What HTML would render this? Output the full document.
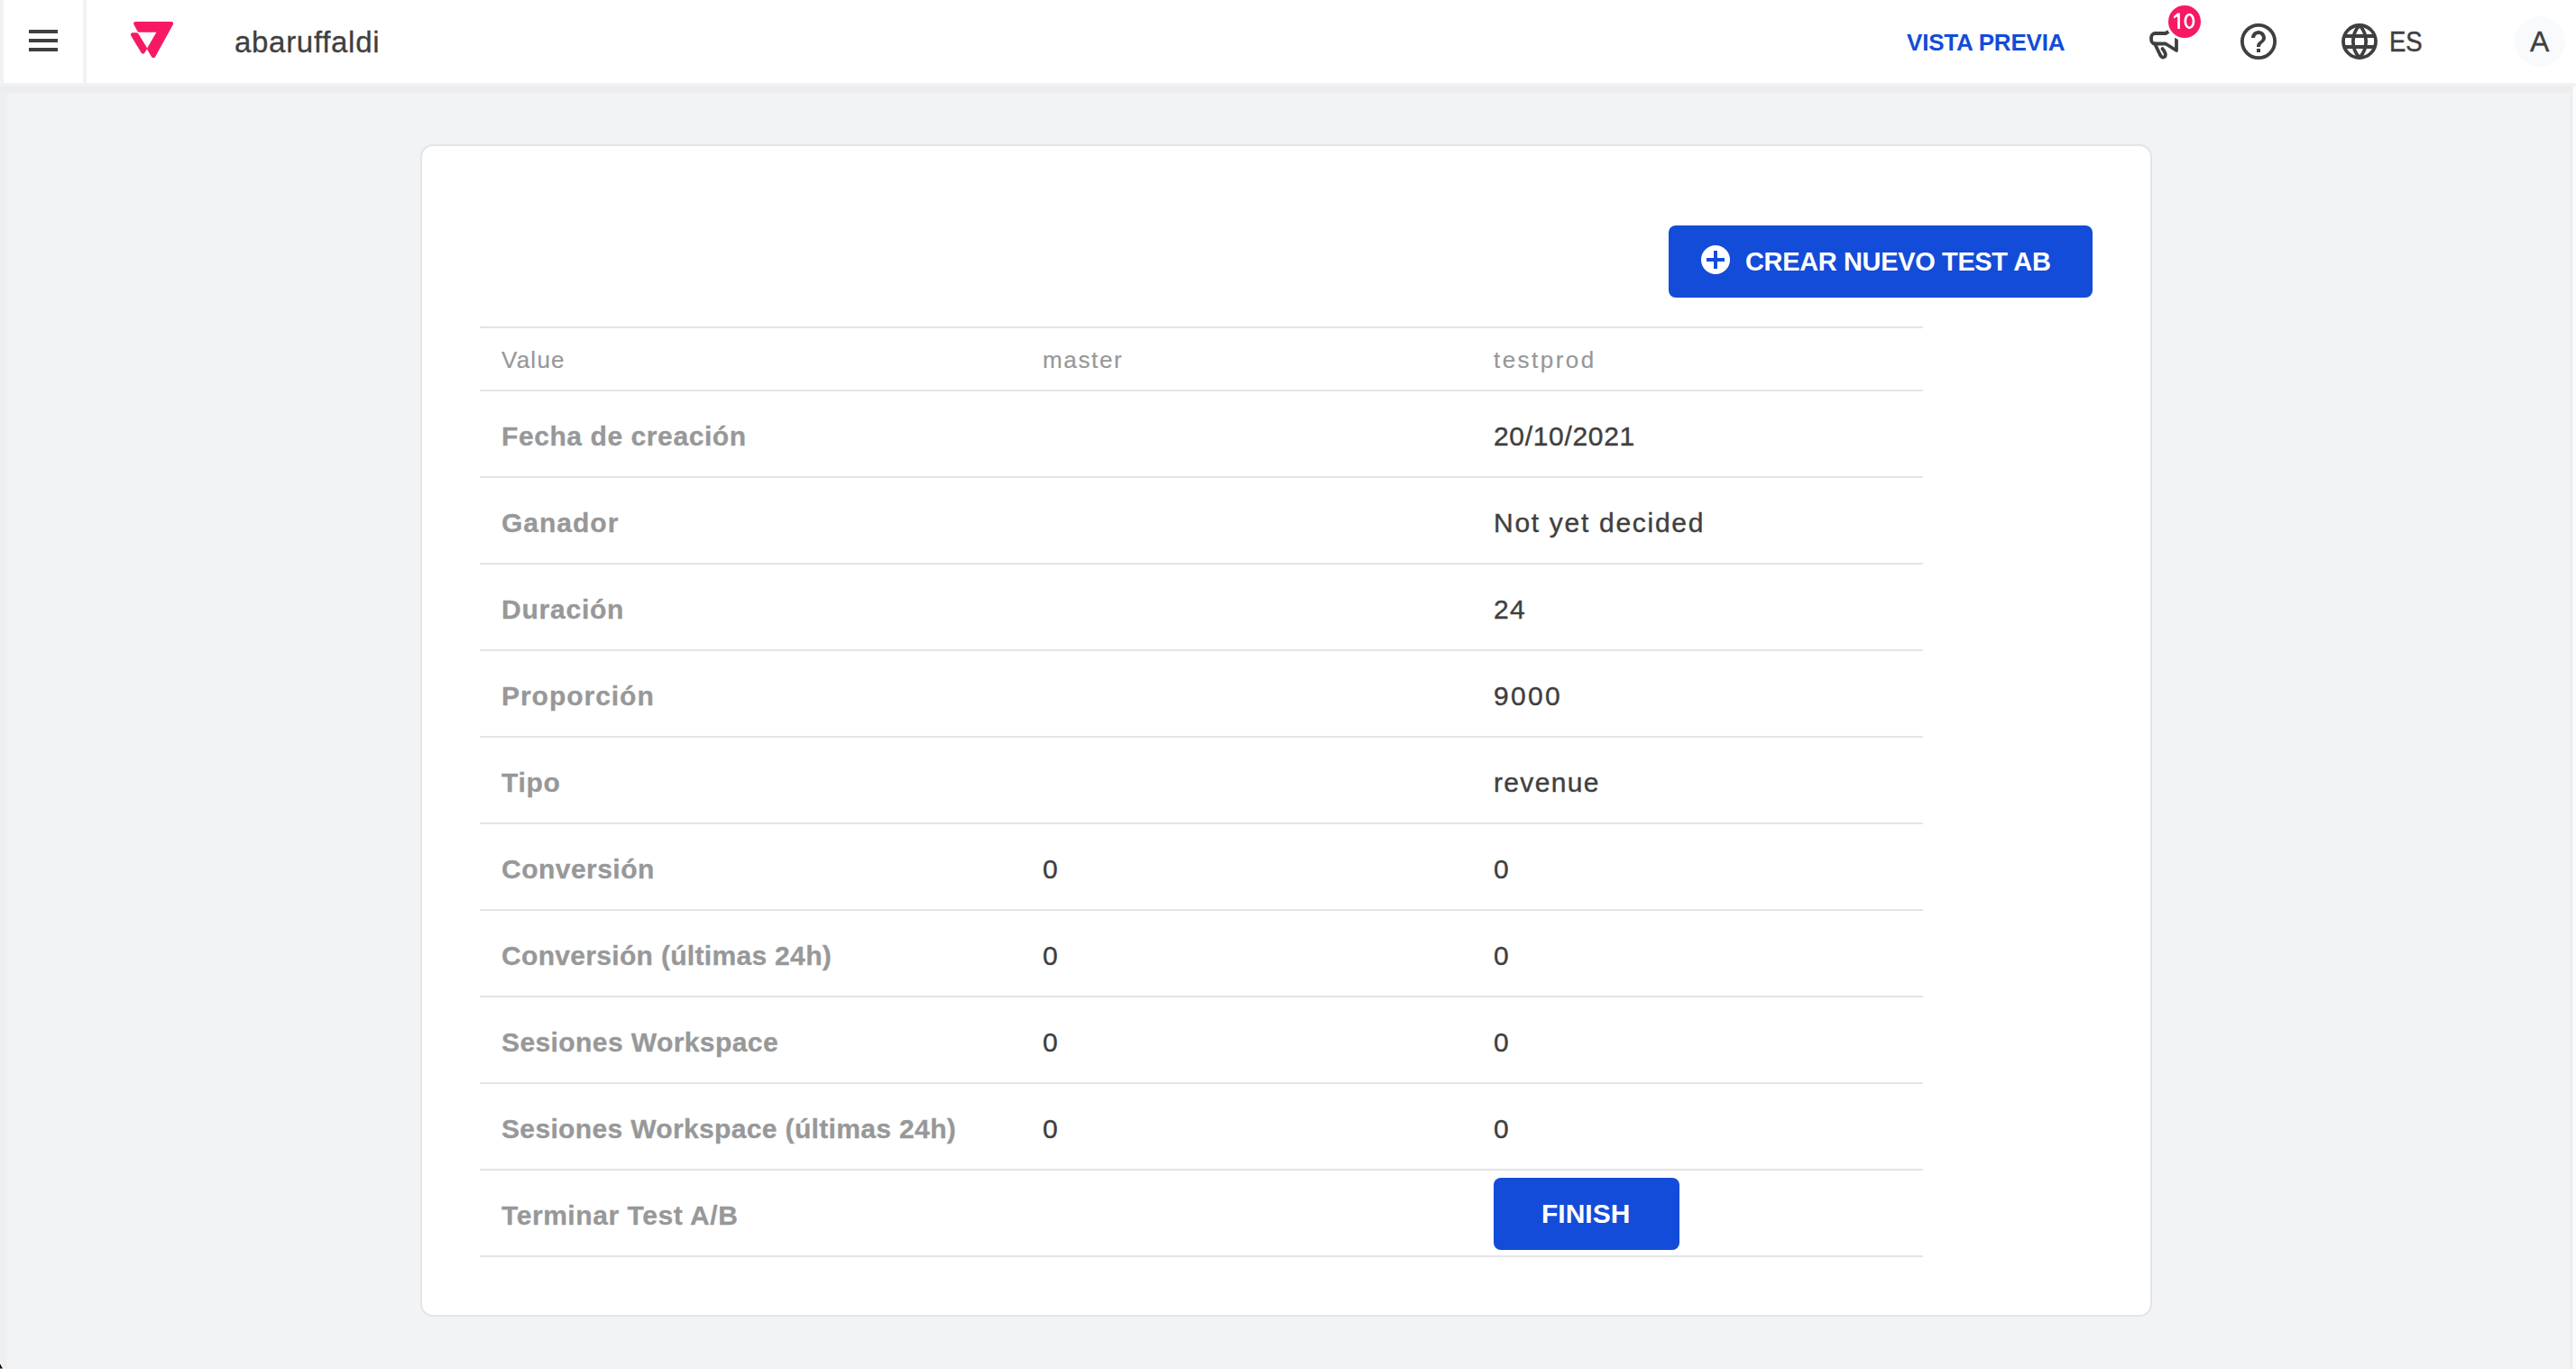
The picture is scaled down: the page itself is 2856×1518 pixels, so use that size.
<!DOCTYPE html>
<html>
<head>
<meta charset="utf-8">
<style>
html,body{margin:0;padding:0;}
body{width:2856px;height:1518px;position:relative;overflow:hidden;background:#f2f3f5;font-family:"Liberation Sans",sans-serif;}
.abs{position:absolute;white-space:nowrap;line-height:normal;}
#hdr{position:absolute;left:0;top:0;width:2856px;height:92px;background:#fff;}
#hdrstrip{position:absolute;left:0;top:0;width:4px;height:92px;background:#f1f2f3;}
#hdrdiv{position:absolute;left:92px;top:0;width:4px;height:92px;background:#f1f2f3;}
#shadow{position:absolute;left:0;top:92px;width:2852px;height:12px;background:linear-gradient(#f2f2f2 0px,#f1f1f2 3px,#ecedef 4px,#ecedef 11px,#f0f1f3 12px);}
#rstrip{position:absolute;left:2852px;top:96px;width:4px;height:1422px;background:#fbfbfb;}
#rstrip2{position:absolute;left:2849px;top:96px;width:3px;height:1422px;background:linear-gradient(90deg,#f2f3f5,#e6e7e9);}
.hb{position:absolute;left:32px;width:32px;height:4px;background:#3f3f40;}
#card{position:absolute;left:466px;top:160px;width:1916px;height:1296px;background:#fff;border:2px solid #e3e4e6;border-radius:14px;}
.line{position:absolute;left:532px;width:1600px;height:2px;background:#e3e4e6;}
.th{font-size:26px;color:#979899;-webkit-text-stroke:0.2px #979899;}
.lbl{font-size:30px;font-weight:700;color:#979899;-webkit-text-stroke:0.3px #979899;}
.val{font-size:30px;color:#3f3f40;-webkit-text-stroke:0.4px #3f3f40;}
.btn{position:absolute;background:#134cd8;border-radius:8px;}
</style>
</head>
<body>
<div id="hdr"></div>
<div id="hdrstrip"></div>
<div id="hdrdiv"></div>
<div id="shadow"></div>
<div id="lstrip" style="position:absolute;left:0;top:104px;width:8px;height:1414px;background:#eeeff1;"></div>
<div id="rstrip2"></div>
<div id="rstrip"></div>

<!-- hamburger -->
<div class="hb" style="top:33px"></div>
<div class="hb" style="top:43px"></div>
<div class="hb" style="top:53px"></div>

<!-- logo -->
<svg style="position:absolute;left:144px;top:24px" width="48" height="40" viewBox="0 0 48 40">
  <g fill="#f71963" stroke="#f71963" stroke-width="4.4" stroke-linejoin="round">
    <polygon points="6.35,2.20 45.92,2.20 26.05,38.07 21.27,30.11 33.23,9.60 10.40,9.60"/>
    <polygon points="3.15,14.50 7.44,14.50 16.82,29.62 14.50,33.42"/>
  </g>
</svg>

<div class="abs" style="left:260px;top:28px;font-size:33px;letter-spacing:0.7px;color:#3f3f40;-webkit-text-stroke:0.3px #3f3f40;">abaruffaldi</div>

<div class="abs" style="left:2114px;top:32px;font-size:26px;font-weight:700;letter-spacing:-0.2px;color:#134cd8;">VISTA PREVIA</div>

<!-- megaphone -->
<svg style="position:absolute;left:2370px;top:0px" width="80" height="80" viewBox="0 0 80 80">
  <g fill="none" stroke="#3f3f40" stroke-width="3.8" stroke-linejoin="round" stroke-linecap="round">
  <path d="M43 30 L31 37 L19 37 A4 5.75 0 0 0 19 48.5 L31 48.5 L43 56 Z"/>
  <path d="M19 48.5 L25 61 Q27.5 65.5 30.5 62.5 Q32 59.5 27.5 54"/>
  </g>
  <circle cx="52" cy="24" r="21" fill="#fff"/>
  <circle cx="52" cy="24" r="18" fill="#f71963"/>
</svg>
<svg style="position:absolute;left:2400px;top:0px" width="44" height="44" viewBox="0 0 44 44">
  <path d="M14.2 14.6 L16.9 14.6 L16.9 32.1 L14.2 32.1 L14.2 18.2 L10 20.6 L10 18 Z" fill="#fff"/>
  <ellipse cx="27.4" cy="23.4" rx="4.6" ry="7.4" fill="none" stroke="#fff" stroke-width="2.7"/>
</svg>

<!-- help -->
<svg style="position:absolute;left:2480px;top:22px" width="48" height="48" viewBox="0 0 24 24">
  <circle cx="12" cy="12" r="9.05" fill="none" stroke="#3f3f40" stroke-width="1.9"/>
  <path fill="#3f3f40" d="M11 18h2v-2h-2v2zm1-12c-2.21 0-4 1.79-4 4h2c0-1.1.9-2 2-2s2 .9 2 2c0 2-3 1.75-3 5h2c0-2.25 3-2.5 3-5 0-2.21-1.79-4-4-4z"/>
</svg>

<!-- globe -->
<svg style="position:absolute;left:2592px;top:22px" width="48" height="48" viewBox="0 0 48 48">
  <g fill="none" stroke="#3f3f40" stroke-width="3.8" stroke-linejoin="round">
    <circle cx="24" cy="24" r="18"/>
    <line x1="6" y1="18" x2="42" y2="18"/>
    <line x1="6" y1="30" x2="42" y2="30"/>
    <path d="M24 6 C14.5 16 14.5 32 24 42 C33.5 32 33.5 16 24 6 Z"/>
  </g>
</svg>
<div class="abs" style="left:2649px;top:28px;font-size:32px;letter-spacing:0px;transform:scaleX(0.86);transform-origin:0 0;color:#3f3f40;-webkit-text-stroke:0.5px #3f3f40;">ES</div>

<!-- avatar -->
<div style="position:absolute;left:2788px;top:18px;width:56px;height:56px;border-radius:50%;background:#f9fafb;"></div>
<div class="abs" style="left:2805px;top:28px;font-size:32px;color:#3f3f40;-webkit-text-stroke:0.4px #3f3f40;">A</div>

<!-- card -->
<div id="card"></div>

<div class="btn" style="left:1850px;top:250px;width:470px;height:80px;"></div>
<svg style="position:absolute;left:1886px;top:272px" width="32" height="32" viewBox="0 0 32 32">
  <circle cx="16" cy="16" r="16" fill="#fff"/>
  <rect x="6" y="14" width="20" height="4" fill="#134cd8"/>
  <rect x="14" y="6" width="4" height="20" fill="#134cd8"/>
</svg>
<div class="abs" style="left:1935px;top:274px;font-size:29px;font-weight:700;letter-spacing:-0.36px;color:#fff;">CREAR NUEVO TEST AB</div>

<!-- table lines -->
<div class="line" style="top:362px"></div>
<div class="line" style="top:432px"></div>
<div class="line" style="top:528px"></div>
<div class="line" style="top:624px"></div>
<div class="line" style="top:720px"></div>
<div class="line" style="top:816px"></div>
<div class="line" style="top:912px"></div>
<div class="line" style="top:1008px"></div>
<div class="line" style="top:1104px"></div>
<div class="line" style="top:1200px"></div>
<div class="line" style="top:1296px"></div>
<div class="line" style="top:1392px"></div>

<!-- header row -->
<div class="abs th" style="left:556px;top:384px;letter-spacing:1.25px;">Value</div>
<div class="abs th" style="left:1156px;top:384px;letter-spacing:1.66px;">master</div>
<div class="abs th" style="left:1656px;top:384px;letter-spacing:2.46px;">testprod</div>

<!-- rows -->
<div class="abs lbl" style="left:556px;top:467px;letter-spacing:0.58px;">Fecha de creación</div>
<div class="abs val" style="left:1656px;top:467px;letter-spacing:0.67px;">20/10/2021</div>
<div class="abs lbl" style="left:556px;top:563px;letter-spacing:1.0px;">Ganador</div>
<div class="abs val" style="left:1656px;top:563px;letter-spacing:1.71px;">Not yet decided</div>
<div class="abs lbl" style="left:556px;top:659px;letter-spacing:0.77px;">Duración</div>
<div class="abs val" style="left:1656px;top:659px;letter-spacing:1.3px;">24</div>
<div class="abs lbl" style="left:556px;top:755px;letter-spacing:0.97px;">Proporción</div>
<div class="abs val" style="left:1656px;top:755px;letter-spacing:2.33px;">9000</div>
<div class="abs lbl" style="left:556px;top:851px;letter-spacing:0.7px;">Tipo</div>
<div class="abs val" style="left:1656px;top:851px;letter-spacing:1.33px;">revenue</div>
<div class="abs lbl" style="left:556px;top:947px;letter-spacing:0.47px;">Conversión</div>
<div class="abs val" style="left:1156px;top:947px;letter-spacing:0px;">0</div>
<div class="abs val" style="left:1656px;top:947px;letter-spacing:0px;">0</div>
<div class="abs lbl" style="left:556px;top:1043px;letter-spacing:0.32px;">Conversión (últimas 24h)</div>
<div class="abs val" style="left:1156px;top:1043px;letter-spacing:0px;">0</div>
<div class="abs val" style="left:1656px;top:1043px;letter-spacing:0px;">0</div>
<div class="abs lbl" style="left:556px;top:1139px;letter-spacing:0.41px;">Sesiones Workspace</div>
<div class="abs val" style="left:1156px;top:1139px;letter-spacing:0px;">0</div>
<div class="abs val" style="left:1656px;top:1139px;letter-spacing:0px;">0</div>
<div class="abs lbl" style="left:556px;top:1235px;letter-spacing:0.35px;">Sesiones Workspace (últimas 24h)</div>
<div class="abs val" style="left:1156px;top:1235px;letter-spacing:0px;">0</div>
<div class="abs val" style="left:1656px;top:1235px;letter-spacing:0px;">0</div>
<div class="abs lbl" style="left:556px;top:1331px;letter-spacing:0.56px;">Terminar Test A/B</div>
<div class="btn" style="left:1656px;top:1306px;width:206px;height:80px;"></div>
<div class="abs" style="left:1709px;top:1329px;font-size:30px;font-weight:700;color:#fff;">FINISH</div>
<svg style="position:absolute;left:0;top:1504px" width="8" height="14" viewBox="0 0 8 14"><polygon points="-2,3 4,14 -2,14" fill="#111" stroke="#fff" stroke-width="1.2"/></svg>
</body>
</html>
